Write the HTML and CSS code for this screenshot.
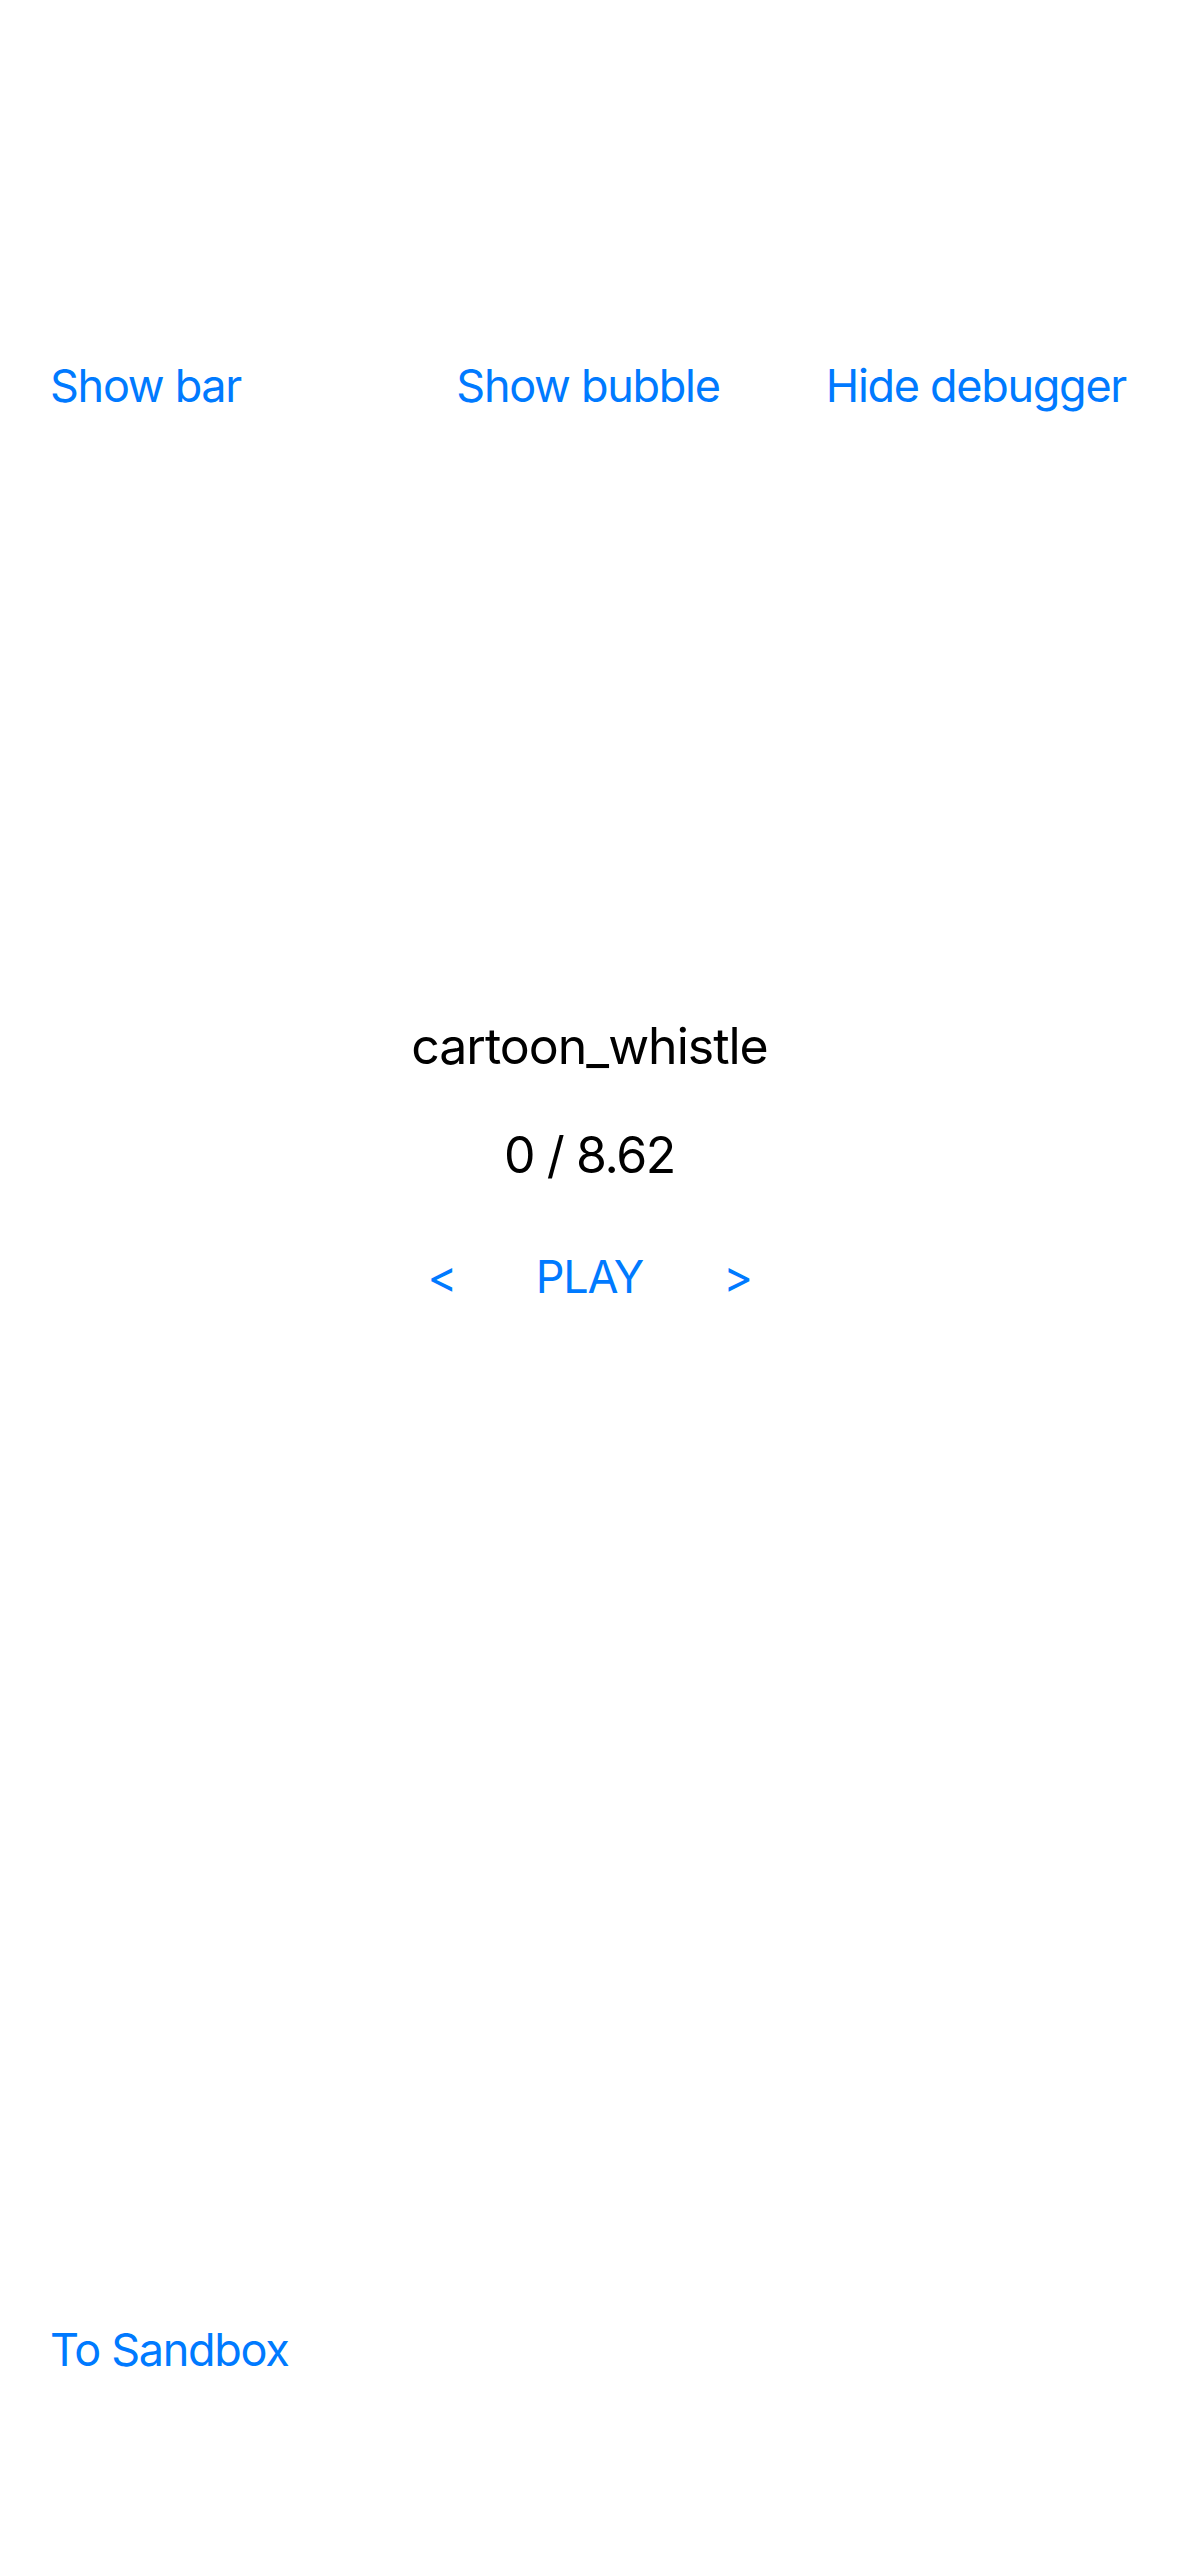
FILE: index.html
```html
<!DOCTYPE html>
<html lang="en">
<head>
<meta charset="utf-8">
<title>Player</title>
<link rel="stylesheet" href="styles.css">
</head>
<body>
<main class="screen">
  <nav class="toolbar">
    <a class="link link-start">Show bar</a>
    <a class="link link-center">Show bubble</a>
    <a class="link link-end">Hide debugger</a>
  </nav>
  <section class="player">
    <h1 class="track">cartoon_whistle</h1>
    <p class="time">0 / 8.62</p>
    <div class="controls">
      <a class="link">&lt;</a>
      <a class="link">PLAY</a>
      <a class="link">&gt;</a>
    </div>
  </section>
  <footer class="footer">
    <a class="link">To Sandbox</a>
  </footer>
</main>
</body>
</html>
```
FILE: styles.css
```css
html, body {
  margin: 0;
  padding: 0;
  background: #ffffff;
}
body {
  font-family: Inter, "Noto Sans", "Liberation Sans", sans-serif;
  color: #000000;
}
.screen {
  width: 1179px;
  height: 2556px;
  display: flex;
  flex-direction: column;
}
.link {
  color: #007aff;
  font-size: 45px;
  line-height: 54px;
  letter-spacing: -1.3px;
  cursor: pointer;
}
.toolbar {
  display: grid;
  grid-template-columns: 1fr 1fr 1fr;
  padding: 359px 53px 0 50px;
}
.link-start { justify-self: start; }
.link-center { justify-self: center; }
.link-end { justify-self: end; }
.player {
  margin-top: 603px;
  display: flex;
  flex-direction: column;
  align-items: center;
}
.track {
  margin: 0;
  font-size: 50px;
  font-weight: 400;
  line-height: 60px;
  letter-spacing: -1px;
}
.time {
  margin: 49px 0 0;
  font-size: 50px;
  line-height: 60px;
  letter-spacing: -1.4px;
}
.controls {
  margin-top: 65px;
  display: flex;
  gap: 80px;
  align-items: baseline;
}
.footer {
  margin-top: 1019px;
  padding-left: 50px;
}
```
